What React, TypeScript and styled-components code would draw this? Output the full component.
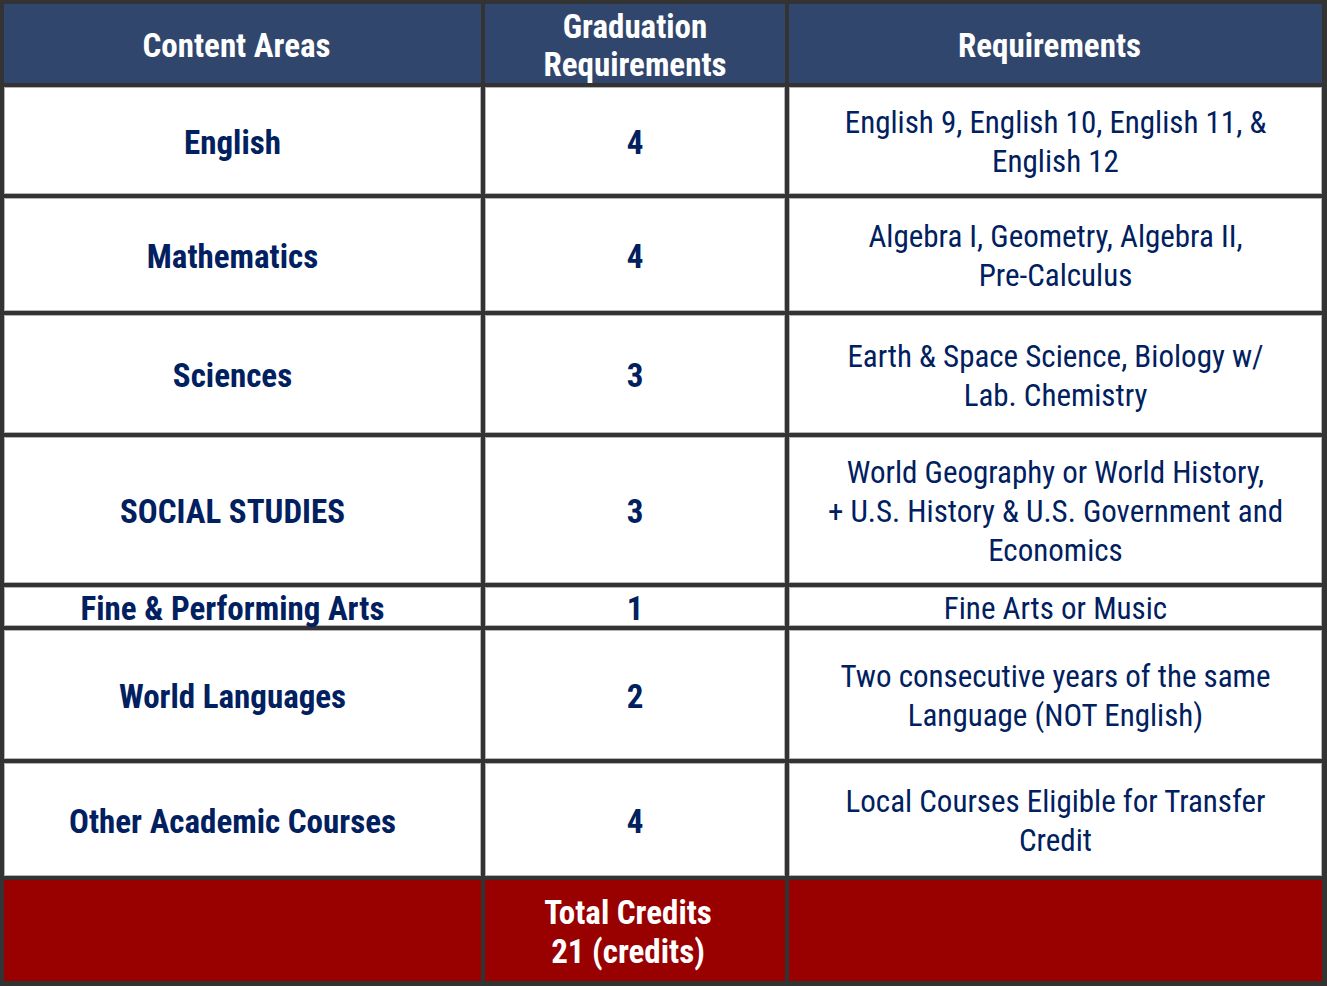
import styled, { createGlobalStyle } from "styled-components";

const rows = [
  { area: "English", credits: "4", req: ["English 9, English 10, English 11, &", "English 12"] },
  { area: "Mathematics", credits: "4", req: ["Algebra I, Geometry, Algebra II,", "Pre-Calculus"] },
  { area: "Sciences", credits: "3", req: ["Earth & Space Science, Biology w/", "Lab. Chemistry"] },
  {
    area: "SOCIAL STUDIES",
    credits: "3",
    req: ["World Geography or World History,", "+ U.S. History & U.S. Government and", "Economics"],
  },
  { area: "Fine & Performing Arts", credits: "1", req: ["Fine Arts or Music"] },
  { area: "World Languages", credits: "2", req: ["Two consecutive years of the same", "Language (NOT English)"] },
  { area: "Other Academic Courses", credits: "4", req: ["Local Courses Eligible for Transfer", "Credit"] },
];

function App() {
  return (
    <>
      <GlobalStyle />
      <Table>
        <Cell $kind="head" $shift={12}>
          Content Areas
        </Cell>
        <Cell $kind="head">
          <Lines>
            <Line>Graduation</Line>
            <Line>Requirements</Line>
          </Lines>
        </Cell>
        <Cell $kind="head" $shift={12}>
          Requirements
        </Cell>
        {rows.map((row) => (
          <Row key={row.area}>
            <Cell $kind="area" $shift={20}>
              {row.area}
            </Cell>
            <Cell $kind="credit">{row.credits}</Cell>
            <Cell $kind="req">
              <Lines>
                {row.req.map((line, i) => (
                  <Line key={i}>{line}</Line>
                ))}
              </Lines>
            </Cell>
          </Row>
        ))}
        <Cell $kind="total" />
        <Cell $kind="total" $shift={14}>
          <Lines>
            <Line>Total Credits</Line>
            <Line>21 (credits)</Line>
          </Lines>
        </Cell>
        <Cell $kind="total" />
      </Table>
    </>
  );
}

const GlobalStyle = createGlobalStyle`
  body {
    margin: 0;
    background: #ffffff;
  }
`;

type Kind = "head" | "area" | "credit" | "req" | "total";

const Table = styled.div`
  box-sizing: border-box;
  width: 1327px;
  height: 986px;
  display: grid;
  grid-template-columns: 477px 300px 533px;
  grid-template-rows: 79px 107px 113px 118px 146px 39px 129px 113px 101px;
  gap: 4px;
  padding: 4px 5px 5px 4px;
  background-color: #333333;
  font-family: "Liberation Sans Narrow", "Roboto Condensed", "DejaVu Sans Condensed", Roboto, sans-serif;
`;

const Row = styled.div`
  display: contents;
`;

const Lines = styled.div`
  display: flex;
  flex-direction: column;
  align-items: center;
`;

const Line = styled.span`
  display: block;
`;

const Cell = styled.div<{ $kind: Kind; $shift?: number }>`
  display: flex;
  align-items: center;
  justify-content: center;
  text-align: center;
  white-space: nowrap;
  box-sizing: border-box;
  font-size: ${(p) => (p.$kind === "req" ? "31px" : "33px")};
  line-height: ${(p) => (p.$kind === "head" ? "38px" : "39px")};
  padding: ${(p) => (p.$kind === "head" ? 5 : 3)}px ${(p) => p.$shift ?? 0}px 0 0;
  color: ${(p) => (p.$kind === "head" || p.$kind === "total" ? "#ffffff" : "#002060")};
  font-weight: ${(p) => (p.$kind === "req" ? 400 : 700)};
  background-color: ${(p) =>
    p.$kind === "head" ? "#30466d" : p.$kind === "total" ? "#990000" : "#ffffff"};
  box-shadow: ${(p) =>
    p.$kind === "head" || p.$kind === "total" ? "none" : "inset 0 0 0 1px #b4b4b4"};
`;

export default App;
